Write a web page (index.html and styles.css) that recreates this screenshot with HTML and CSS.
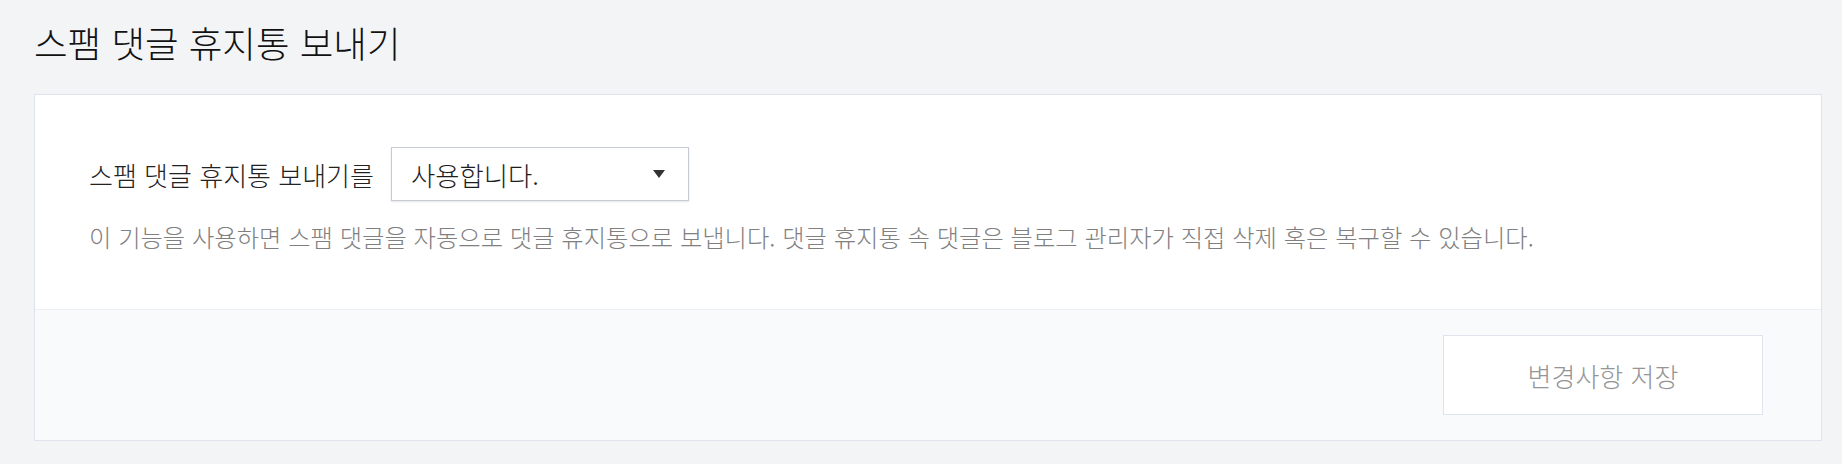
FILE: index.html
```html
<!DOCTYPE html>
<html lang="ko">
<head>
<meta charset="utf-8">
<title>스팸 댓글 휴지통 보내기</title>
<link rel="stylesheet" href="styles.css">
</head>
<body>
<div class="page">
  <h1 class="title">스팸 댓글 휴지통 보내기</h1>
  <section class="card">
    <div class="card-body">
      <div class="row">
        <span class="label">스팸 댓글 휴지통 보내기를</span>
        <div class="select">
          <span class="select-value">사용합니다.</span>
          <span class="select-arrow"></span>
        </div>
      </div>
      <p class="desc">이 기능을 사용하면 스팸 댓글을 자동으로 댓글 휴지통으로 보냅니다. 댓글 휴지통 속 댓글은 블로그 관리자가 직접 삭제 혹은 복구할 수 있습니다.</p>
    </div>
    <div class="card-footer">
      <button class="save-btn" type="button">변경사항 저장</button>
    </div>
  </section>
</div>
</body>
</html>
```

FILE: styles.css
```css
* { box-sizing: border-box; }
html, body {
  margin: 0;
  padding: 0;
  background: #f3f4f6;
  font-family: "Noto Sans CJK KR", "Noto Sans", sans-serif;
  font-weight: 300;
}
.page {
  padding: 22px 20px 23px 34px;
}
.title {
  margin: 0;
  font-size: 36.5px;
  line-height: 42px;
  font-weight: 300;
  color: #111;
}
.card {
  margin-top: 30px;
  background: #fff;
  border: 1px solid #dfe3eb;
}
.card-body {
  padding: 52px 54px 57px 54px;
}
.row {
  display: flex;
  align-items: center;
  gap: 17px;
}
.label {
  font-size: 26px;
  color: #222;
}
.select {
  width: 298px;
  height: 54px;
  border: 1px solid #c6cbd6;
  box-shadow: 0 1px 2px rgba(0, 0, 0, 0.1);
  display: flex;
  align-items: center;
  justify-content: space-between;
  padding: 0 23px 0 19px;
  background: #fff;
}
.select-value {
  font-size: 26.4px;
  color: #1e1e1e;
}
.select-arrow {
  width: 0;
  height: 0;
  border-left: 6px solid transparent;
  border-right: 6px solid transparent;
  border-top: 8px solid #333;
}
.desc {
  margin: 21px 0 0 0;
  font-size: 24.3px;
  line-height: 30px;
  color: #808080;
}
.card-footer {
  border-top: 1px solid #eeeff3;
  background: #f9fafc;
  padding: 25px 58px 25px 0;
  display: flex;
  justify-content: flex-end;
}
.save-btn {
  width: 320px;
  height: 80px;
  background: #fff;
  border: 1px solid #dfe3eb;
  font-family: inherit;
  font-weight: 300;
  font-size: 26px;
  color: #959595;
}
```
